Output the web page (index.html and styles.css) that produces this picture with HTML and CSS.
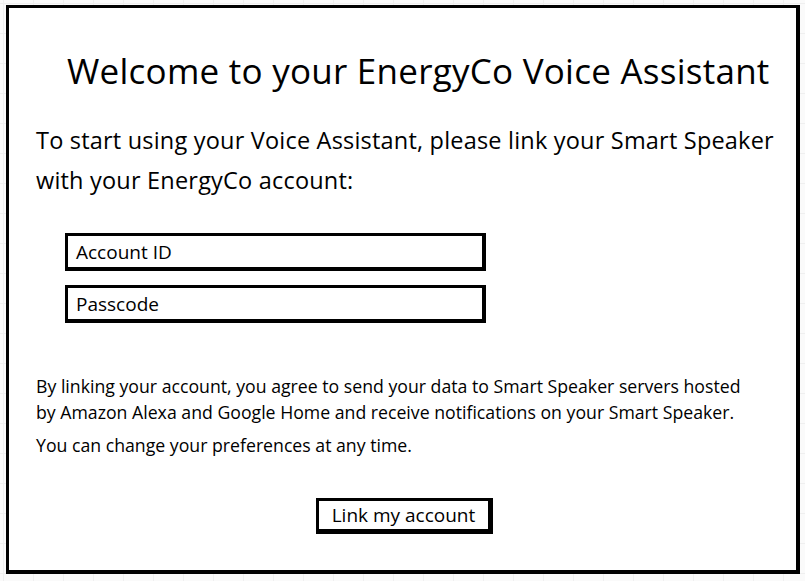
FILE: index.html
```html
<!DOCTYPE html>
<html lang="en">
<head>
<meta charset="utf-8">
<title>EnergyCo Voice Assistant</title>
<link rel="stylesheet" href="styles.css">
</head>
<body>
<main class="frame">
  <h1 class="title">Welcome to your EnergyCo Voice Assistant</h1>
  <p class="intro">To start using your Voice Assistant, please link your Smart Speaker<br>with your EnergyCo account:</p>
  <form class="fields">
    <div class="field"><span class="field-label">Account ID</span></div>
    <div class="field"><span class="field-label">Passcode</span></div>
  </form>
  <div class="terms">
    <p class="terms-line">By linking your account, you agree to send your data to Smart Speaker servers hosted</p>
    <p class="terms-line">by Amazon Alexa and Google Home and receive notifications on your Smart Speaker.</p>
    <p class="terms-line terms-last">You can change your preferences at any time.</p>
  </div>
  <div class="actions">
    <button class="btn" type="button">Link my account</button>
  </div>
</main>
</body>
</html>
```

FILE: styles.css
```css
html, body {
  margin: 0;
  padding: 0;
}

body {
  width: 805px;
  height: 581px;
  overflow: hidden;
  background-color: #fafafa;
  background-image:
    linear-gradient(to right, #efefef 1px, transparent 1px),
    linear-gradient(to bottom, #efefef 1px, transparent 1px);
  background-size: 30px 30px;
  background-position: 3px 3px;
  font-family: "Open Sans", "DejaVu Sans", sans-serif;
  color: #000;
  padding-top: 5px;
  padding-left: 6px;
  box-sizing: border-box;
}

.frame {
  box-sizing: border-box;
  width: 794px;
  height: 569px;
  background: #fff;
  border: 3px solid #000;
  border-right-width: 4px;
  border-bottom-width: 4px;
  padding: 0 0 0 27px;
  display: flex;
  flex-direction: column;
}

.title {
  margin: 43px 0 0 31px;
  font-size: 35px;
  font-weight: 400;
  line-height: 40px;
  letter-spacing: 0.25px;
  white-space: nowrap;
}

.intro {
  margin: 29px 0 0 0;
  font-size: 23.5px;
  line-height: 40px;
  letter-spacing: 0.2px;
  white-space: nowrap;
}

.fields {
  margin: 33px 0 0 29px;
  display: flex;
  flex-direction: column;
  gap: 14px;
}

.field {
  box-sizing: border-box;
  width: 421px;
  height: 38px;
  border: 3px solid #000;
  border-right-width: 4px;
  border-bottom-width: 4px;
  display: flex;
  align-items: center;
  padding-left: 8px;
}

.field-label {
  font-size: 19px;
}

.terms {
  margin: 50px 0 0 0;
  font-size: 17.7px;
}

.terms-line {
  margin: 0;
  line-height: 26px;
  white-space: nowrap;
}

.terms-last {
  margin-top: 7px;
}

.actions {
  margin-top: 40px;
  display: flex;
  padding-left: 280px;
}

.btn {
  box-sizing: border-box;
  width: 177px;
  height: 36px;
  background: #fff;
  border: 3px solid #000;
  border-right-width: 5px;
  border-bottom-width: 5px;
  font-family: inherit;
  font-size: 19px;
  color: #000;
  padding: 0;
  cursor: pointer;
}
```
